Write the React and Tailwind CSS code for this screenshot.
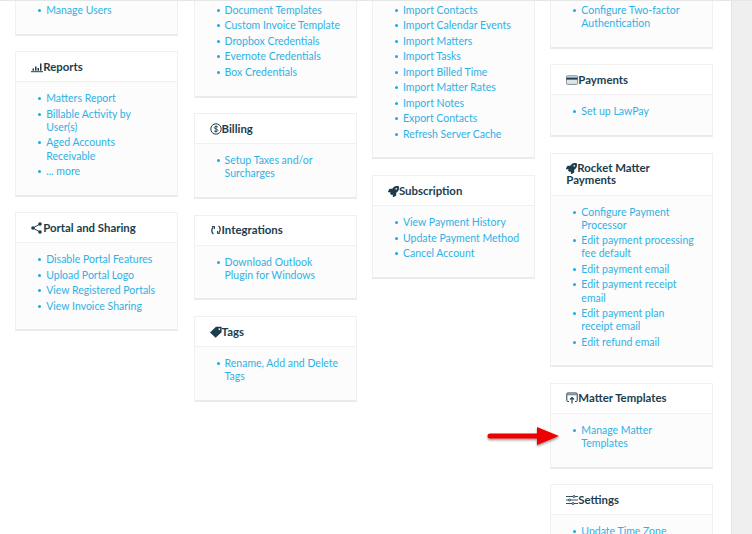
import React from "react";
import { FaRocket } from "react-icons/fa";

const ink = "#1d3d4e";

const ChartIcon = () => (
  <svg width="12" height="12" viewBox="0 0 12 12" fill={ink} className="shrink-0">
    <rect x="0" y="10.2" width="12" height="1" />
    <rect x="1.5" y="7.5" width="1.5" height="2.2" />
    <rect x="4" y="5.5" width="1.5" height="4.2" />
    <rect x="6.5" y="7" width="1.5" height="2.7" />
    <rect x="9" y="2.5" width="1.5" height="7.2" />
  </svg>
);
const DollarIcon = () => (
  <svg width="12" height="12" viewBox="0 0 12 12" className="shrink-0">
    <circle cx="6" cy="6" r="5.2" fill="none" stroke={ink} strokeWidth="1" />
    <path d="M8 4.200C7.400 3.300 4.300 3.200 4.200 4.700 4.100 6.200 8 5.700 7.900 7.400 7.800 8.900 4.600 8.800 4 7.800M6 2.500v7" fill="none" stroke={ink} strokeWidth="0.9" />
  </svg>
);
const SyncIcon = () => (
  <svg width="12" height="12" viewBox="0 0 12 12" className="shrink-0" fill="none" stroke={ink} strokeWidth="1.3">
    <path d="M3.400 10C1.300 8.400 1.200 5 3.300 3.200" />
    <path d="M1.900 2.600 4.600 2.600 4.400 5" strokeWidth="1" />
    <path d="M8.600 2C10.700 3.600 10.800 7 8.700 8.800" />
    <path d="M10.100 9.400 7.400 9.400 7.600 7" strokeWidth="1" />
  </svg>
);
const ShareIcon = () => (
  <svg width="11" height="12" viewBox="0 0 11 12" className="shrink-0 mr-px" fill={ink}>
    <circle cx="2" cy="6" r="1.800" />
    <circle cx="9" cy="2" r="1.800" />
    <circle cx="9" cy="10" r="1.800" />
    <path d="M2 6 9 2M2 6 9 10" stroke={ink} strokeWidth="1" />
  </svg>
);
const TagIcon = () => (
  <svg width="12" height="12" viewBox="0 0 12 12" className="shrink-0">
    <path fillRule="evenodd" d="M0 6.400 6 .8h5.600v5.400L5.600 11.800ZM9.400 2.200a.9.9 0 1 0 .01 0Z" fill={ink} />
  </svg>
);
const RocketIcon = () => <FaRocket size={11} color={ink} className="shrink-0" />;
const CardIcon = () => (
  <svg width="12" height="12" viewBox="0 0 12 12" className="shrink-0">
    <rect x="0.400" y="1.800" width="11.200" height="8.600" rx="1" fill="#dfe4e6" stroke="#5f7683" strokeWidth="0.8" />
    <rect x="0.400" y="3.600" width="11.200" height="2" fill={ink} />
  </svg>
);
const UploadIcon = () => (
  <svg width="12" height="12" viewBox="0 0 12 12" className="shrink-0" fill="none" stroke={ink}>
    <path d="M3 9.500H1.800a1 1 0 0 1-1-1V2a1 1 0 0 1 1-1h8.400a1 1 0 0 1 1 1v6.500a1 1 0 0 1-1 1H9" strokeWidth="1" />
    <path d="M1 2.600h10" strokeWidth="1.400" stroke="#7d919c" />
    <path d="M6 11.500V5.500M4 7.500l2-2 2 2" strokeWidth="1.100" />
  </svg>
);
const SlidersIcon = () => (
  <svg width="12" height="12" viewBox="0 0 12 12" className="shrink-0" fill="#fff" stroke={ink} strokeWidth="0.9">
    <path d="M0 2.500h12M0 6h12M0 9.500h12" />
    <circle cx="8" cy="2.500" r="1" />
    <circle cx="3.500" cy="6" r="1" />
    <circle cx="7" cy="9.500" r="1" />
  </svg>
);

function Card({ icon, title, items }) {
  return (
    <section className="border border-[#f0f0f0] border-b-[2px] border-b-[#ebebeb] bg-[#fcfcfc]">
      {title && (
        <h3 className="px-[15px] py-[8.5px] border-b border-[#f0f0f0] bg-white text-[11.4px] leading-[12px] font-bold text-[#1d3d4e]">
          {icon && <span className="inline-block align-[-2px]">{icon}</span>}
          {title}
        </h3>
      )}
      <ul className="pt-[10px] pb-[16.5px] pl-[22px] pr-[15px] flex flex-col gap-[2.4px]">
        {items.map((t) => (
          <li key={t} className="flex gap-[5px] text-[10.5px] leading-[13.1px] text-[#2fb1e5]">
            <span className="w-[3px] h-[3px] mt-[5px] rounded-full bg-[#14ade3] shrink-0" />
            <span className={t === "Update Payment Method" ? "whitespace-nowrap" : ""}>{t}</span>
          </li>
        ))}
      </ul>
    </section>
  );
}

const Col = ({ children }) => (
  <div className="w-[163px] shrink-0 flex flex-col gap-[15.75px] -mt-[8px]">{children}</div>
);

export default function App() {
  return (
    <div className="relative w-[752px] h-[534px] overflow-hidden flex bg-white border-t border-[#e6e6e6] font-['Lato','Liberation_Sans',sans-serif]">
      <main className="flex-1 flex gap-[15.4px] pl-[15.2px] items-start">
        <Col>
          <Card items={["Manage Users"]} />
          <Card icon={<ChartIcon />} title="Reports" items={["Matters Report", "Billable Activity by User(s)", "Aged Accounts Receivable", "... more"]} />
          <Card icon={<ShareIcon />} title="Portal and Sharing" items={["Disable Portal Features", "Upload Portal Logo", "View Registered Portals", "View Invoice Sharing"]} />
        </Col>
        <Col>
          <Card items={["Document Templates", "Custom Invoice Template", "Dropbox Credentials", "Evernote Credentials", "Box Credentials"]} />
          <Card icon={<DollarIcon />} title="Billing" items={["Setup Taxes and/or Surcharges"]} />
          <Card icon={<SyncIcon />} title="Integrations" items={["Download Outlook Plugin for Windows"]} />
          <Card icon={<TagIcon />} title="Tags" items={["Rename, Add and Delete Tags"]} />
        </Col>
        <Col>
          <Card items={["Import Contacts", "Import Calendar Events", "Import Matters", "Import Tasks", "Import Billed Time", "Import Matter Rates", "Import Notes", "Export Contacts", "Refresh Server Cache"]} />
          <Card icon={<RocketIcon />} title="Subscription" items={["View Payment History", "Update Payment Method", "Cancel Account"]} />
        </Col>
        <Col>
          <Card items={["Configure Two-factor Authentication"]} />
          <Card icon={<CardIcon />} title="Payments" items={["Set up LawPay"]} />
          <Card icon={<RocketIcon />} title="Rocket Matter Payments" items={["Configure Payment Processor", "Edit payment processing fee default", "Edit payment email", "Edit payment receipt email", "Edit payment plan receipt email", "Edit refund email"]} />
          <Card icon={<UploadIcon />} title="Matter Templates" items={["Manage Matter Templates"]} />
          <Card icon={<SlidersIcon />} title="Settings" items={["Update Time Zone"]} />
        </Col>
      </main>
      <aside className="w-[21px] shrink-0 bg-[#efefef] border-l border-[#e6e6e6]" />
      <svg width="84" height="30" viewBox="0 0 84 30" className="absolute left-[484px] top-[420px]">
        <defs>
          <filter id="s" x="-10%" y="-30%" width="120%" height="170%">
            <feDropShadow dx="0" dy="1.5" stdDeviation="1.2" floodColor="#000" floodOpacity="0.45" />
          </filter>
        </defs>
        <path d="M6 12.500H53V6l22 9-22 9v-6.500H6a2.500 2.500 0 0 1 0-5Z" fill="#ee0000" filter="url(#s)" />
      </svg>
    </div>
  );
}
